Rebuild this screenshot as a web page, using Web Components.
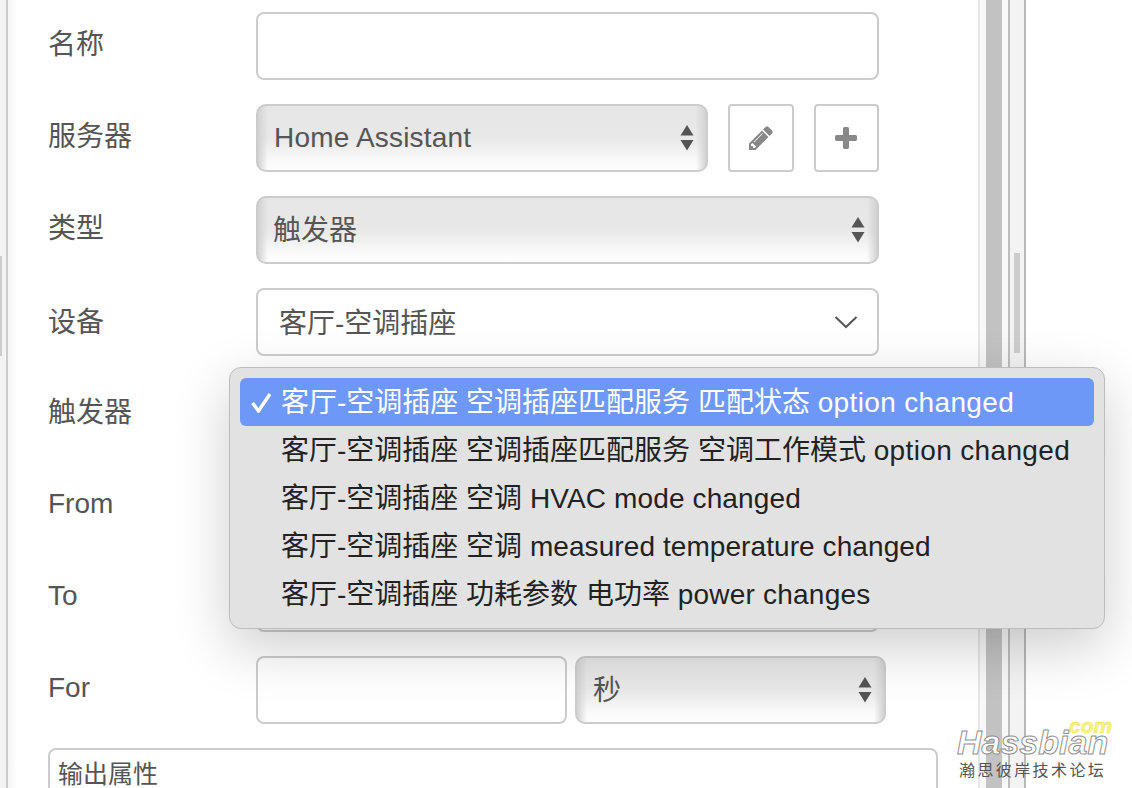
<!DOCTYPE html>
<html lang="zh">
<head>
<meta charset="utf-8">
<title>节点编辑</title>
<style>
html, body { margin: 0; height: 100%; overflow: hidden; background: #fff; }
body { font-family: "Liberation Sans", "Noto Sans CJK SC", sans-serif; }
</style>
</head>
<body>
<editor-frame>
  <form-row label="名称"><text-field></text-field></form-row>
  <form-row label="服务器">
    <mac-select style="width:452px;flex:none;--nudge:0px;--indent:16px;--track:.2px">Home Assistant</mac-select>
    <icon-button icon="pencil" style="margin-left:20px;width:66px"></icon-button>
    <icon-button icon="plus" style="margin-left:20px;width:65px"></icon-button>
  </form-row>
  <form-row label="类型"><mac-select>触发器</mac-select></form-row>
  <form-row label="设备" style="--label-top:18px"><device-select>客厅-空调插座</device-select></form-row>
  <form-row label="触发器"><device-select></device-select></form-row>
  <form-row label="From" latin><text-field></text-field></form-row>
  <form-row label="To" latin><text-field></text-field></form-row>
  <form-row label="For" latin>
    <text-field style="width:311px;flex:none"></text-field>
    <mac-select style="width:311px;flex:none;margin-left:8px;--indent:16px">秒</mac-select>
  </form-row>
  <output-box>输出属性</output-box>

  <popup-menu slot="over">
    <menu-option selected>客厅-空调插座 空调插座匹配服务 匹配状态 <span style="letter-spacing:.35px">option changed</span></menu-option>
    <menu-option>客厅-空调插座 空调插座匹配服务 空调工作模式 <span style="letter-spacing:.35px">option changed</span></menu-option>
    <menu-option>客厅-空调插座 空调 <span style="letter-spacing:.13px">HVAC mode changed</span></menu-option>
    <menu-option>客厅-空调插座 空调 <span style="letter-spacing:.08px">measured temperature changed</span></menu-option>
    <menu-option>客厅-空调插座 功耗参数 电功率 <span style="letter-spacing:.22px">power changes</span></menu-option>
  </popup-menu>
  <site-mark slot="over"></site-mark>
</editor-frame>

<script>
// ----- Moldura: tiras laterais + painel do formulario -----
class EditorFrame extends HTMLElement {
  constructor() {
    super();
    const shadow = this.attachShadow({ mode: 'open' });
    shadow.innerHTML = `
      <style>
:host {
  display: flex;
  position: relative;
  width: 1132px;
  height: 788px;
  overflow: hidden;
  font-family: "Liberation Sans", "Noto Sans CJK SC", sans-serif;
  color: #555;
}
.left {
  flex: none;
  width: 6px;
  background: #f3f3f3;
  border-right: 2px solid #ccc;
  position: relative;
}
.left i {
  position: absolute;
  left: 0;
  top: 256px;
  width: 2px;
  height: 100px;
  background: #ccc;
}
.panel {
  flex: none;
  width: 930px;
  padding: 12px 0 0 40px;
  background: linear-gradient(to right, #f4f4f4, #fff 10px);
}
.gutter {
  flex: none;
  display: flex;
}
.g1 { width: 2px; background: #e6e6e6; }
.g2 { width: 6px; background: #f8f8f8; }
.g3 { width: 16px; background: #c2c2c2; }
.g4 { width: 6px; background: #f8f8f8; }
.g5 { width: 2px; background: #bdbdbd; }
.track {
  width: 14px;
  background: #f3f3f3;
  border-right: 2px solid #b9b9b9;
  position: relative;
}
.track i {
  position: absolute;
  left: 4px;
  top: 253px;
  width: 6px;
  height: 100px;
  background: #ccc;
}
.rest { flex: 1; background: #fff; }
      </style>
      <div class="left"><i></i></div>
      <div class="panel"><slot></slot></div>
      <div class="gutter">
        <div class="g1"></div><div class="g2"></div><div class="g3"></div><div class="g4"></div><div class="g5"></div>
        <div class="track"><i></i></div>
      </div>
      <div class="rest"></div>
      <slot name="over"></slot>
    `;
  }
}
customElements.define('editor-frame', EditorFrame);

// ----- Linha do formulario -----
class FormRow extends HTMLElement {
  constructor() {
    super();
    const shadow = this.attachShadow({ mode: 'open' });
    shadow.innerHTML = `
      <style>
:host {
  display: flex;
  align-items: stretch;
  height: 68px;
  margin-bottom: 24px;
}
label {
  flex: none;
  width: 208px;
  font-size: 28px;
  line-height: 34px;
  padding-top: var(--label-top, 16px);
  color: #555;
}
:host([latin]) label { padding-top: 15px; }
.field {
  display: flex;
  width: 623px;
}
      </style>
      <label></label>
      <div class="field"><slot></slot></div>
    `;
    shadow.querySelector('label').textContent = this.getAttribute('label');
  }
}
customElements.define('form-row', FormRow);

// ----- Campo de texto -----
class TextField extends HTMLElement {
  constructor() {
    super();
    const shadow = this.attachShadow({ mode: 'open' });
    shadow.innerHTML = `
      <style>
:host {
  display: block;
  flex: 1;
  box-sizing: border-box;
  height: 68px;
  background: #fff;
  border: 2px solid #ccc;
  border-radius: 8px;
}
      </style>
    `;
  }
}
customElements.define('text-field', TextField);

// ----- Select nativo do mac (gradiente + setas) -----
class MacSelect extends HTMLElement {
  constructor() {
    super();
    const shadow = this.attachShadow({ mode: 'open' });
    shadow.innerHTML = `
      <style>
:host {
  display: flex;
  align-items: center;
  justify-content: space-between;
  flex: 1;
  box-sizing: border-box;
  height: 68px;
  padding: 0 12px 0 var(--indent, 15px);
  border: 2px solid #ccc;
  border-radius: 10px;
  font-size: 28px;
  color: #555;
  background:
    linear-gradient(to right, #d2d2d2, rgba(210,210,210,0) 10px),
    linear-gradient(to left, #d2d2d2, rgba(210,210,210,0) 10px),
    linear-gradient(#e6e6e6, #e8e8e8 50%, #fbfbfb 88%, #fdfdfd);
}
span {
  position: relative;
  top: var(--nudge, -2px);
  letter-spacing: var(--track, 0);
}
svg { display: block; flex: none; }
      </style>
      <span><slot></slot></span>
      <svg width="14" height="26" viewBox="0 0 14 26">
        <path d="M7 0L13.5 10.5H.5z M.5 15H13.5L7 25.5z" fill="#555"/>
      </svg>
    `;
  }
}
customElements.define('mac-select', MacSelect);

// ----- Select do dispositivo (branco com chevron) -----
class DeviceSelect extends HTMLElement {
  constructor() {
    super();
    const shadow = this.attachShadow({ mode: 'open' });
    shadow.innerHTML = `
      <style>
:host {
  display: flex;
  align-items: center;
  justify-content: space-between;
  flex: 1;
  box-sizing: border-box;
  height: 68px;
  padding: 0 19px 0 21px;
  background: #fff;
  border: 2px solid #ccc;
  border-radius: 8px;
  font-size: 28px;
  color: #555;
}
span { position: relative; top: -1px; }
svg { display: block; flex: none; }
      </style>
      <span><slot></slot></span>
      <svg width="24" height="14" viewBox="0 0 24 14">
        <path d="M1.5 2L12 12L22.5 2" fill="none" stroke="#555" stroke-width="2"/>
      </svg>
    `;
  }
}
customElements.define('device-select', DeviceSelect);

// ----- Botao com icone -----
const BUTTON_ICONS = {
  pencil: '<svg width="24" height="24" viewBox="128 128 1536 1536"><path fill="#888" d="M491 1536l91-91-235-235-91 91v107h128v128h107zm523-928q0-22-22-22-10 0-17 7l-542 542q-7 7-7 17 0 22 22 22 10 0 17-7l542-542q7-7 7-17zm-54-192l416 416-832 832h-416v-416zm683 96q0 53-37 90l-166 166-416-416 166-165q36-38 90-38 53 0 91 38l235 234q37 39 37 91z"/></svg>',
  plus: '<svg width="22" height="22" viewBox="192 128 1408 1408" style="margin-left:-2px"><path fill="#888" d="M1600 736v192q0 40-28 68t-68 28h-416v416q0 40-28 68t-68 28h-192q-40 0-68-28t-28-68v-416h-416q-40 0-68-28t-28-68v-192q0-40 28-68t68-28h416v-416q0-40 28-68t68-28h192q40 0 68 28t28 68v416h416q40 0 68 28t28 68z"/></svg>'
};

class IconButton extends HTMLElement {
  constructor() {
    super();
    const shadow = this.attachShadow({ mode: 'open' });
    shadow.innerHTML = `
      <style>
:host {
  display: flex;
  align-items: center;
  justify-content: center;
  flex: none;
  box-sizing: border-box;
  height: 68px;
  background: #fff;
  border: 2px solid #ccc;
  border-radius: 4px;
}
svg { display: block; }
      </style>
      ${BUTTON_ICONS[this.getAttribute('icon')]}
    `;
  }
}
customElements.define('icon-button', IconButton);

// ----- Caixa "输出属性" -----
class OutputBox extends HTMLElement {
  constructor() {
    super();
    const shadow = this.attachShadow({ mode: 'open' });
    shadow.innerHTML = `
      <style>
:host {
  display: block;
  box-sizing: border-box;
  width: 890px;
  height: 120px;
  padding: 7px 8px;
  background: #fff;
  border: 2px solid #ccc;
  border-radius: 8px;
  font-size: 25px;
  line-height: 34px;
  color: #555;
}
      </style>
      <slot></slot>
    `;
  }
}
customElements.define('output-box', OutputBox);

// ----- Menu popup aberto -----
class PopupMenu extends HTMLElement {
  constructor() {
    super();
    const shadow = this.attachShadow({ mode: 'open' });
    shadow.innerHTML = `
      <style>
:host {
  position: absolute;
  left: 229px;
  top: 367px;
  box-sizing: border-box;
  width: 876px;
  height: 262px;
  padding: 10px;
  background: #e2e2e2;
  border: 1px solid #bdbdbd;
  border-radius: 12px;
  box-shadow: 0 18px 56px rgba(0,0,0,.2);
}
      </style>
      <slot></slot>
    `;
  }
}
customElements.define('popup-menu', PopupMenu);

class MenuOption extends HTMLElement {
  constructor() {
    super();
    const shadow = this.attachShadow({ mode: 'open' });
    shadow.innerHTML = `
      <style>
:host {
  display: flex;
  align-items: center;
  box-sizing: border-box;
  height: 48px;
  padding: 0 0 4px 41px;
  position: relative;
  border-radius: 6px;
  font-size: 28px;
  color: #222;
  white-space: pre;
}
:host([selected]) {
  background: #6e98f8;
  color: #fff;
}
svg {
  display: none;
  position: absolute;
  left: 11px;
  top: 14px;
}
:host([selected]) svg { display: block; }
.text { display: block; }
      </style>
      <svg width="21" height="21" viewBox="0 0 21 21">
        <path d="M1.5 11L7.5 19L19 2" fill="none" stroke="#fff" stroke-width="3.4"/>
      </svg>
      <div class="text"><slot></slot></div>
    `;
  }
}
customElements.define('menu-option', MenuOption);

// ----- Marca d'agua do forum -----
class SiteMark extends HTMLElement {
  constructor() {
    super();
    const shadow = this.attachShadow({ mode: 'open' });
    shadow.innerHTML = `
      <style>
:host {
  position: absolute;
  left: 956px;
  top: 716px;
  width: 160px;
  height: 66px;
  font-family: "Liberation Sans", "Noto Sans CJK SC", sans-serif;
}
.name {
  position: absolute;
  left: 1px;
  top: 14px;
  font-size: 34px;
  line-height: 24px;
  font-weight: 700;
  font-style: italic;
  color: #fff;
  -webkit-text-stroke: 1px #8f8f8f;
}
.com {
  position: absolute;
  left: 113px;
  top: 5px;
  font-size: 21px;
  line-height: 9px;
  font-weight: 700;
  font-style: italic;
  color: #fbf57a;
  -webkit-text-stroke: .5px #e8e060;
}
.cn {
  position: absolute;
  left: 3px;
  top: 45px;
  font-size: 16px;
  line-height: 20px;
  letter-spacing: 2.4px;
  color: #555;
  white-space: nowrap;
}
      </style>
      <div class="name">Hassbian</div>
      <div class="com">com</div>
      <div class="cn">瀚思彼岸技术论坛</div>
    `;
  }
}
customElements.define('site-mark', SiteMark);
</script>
</body>
</html>
